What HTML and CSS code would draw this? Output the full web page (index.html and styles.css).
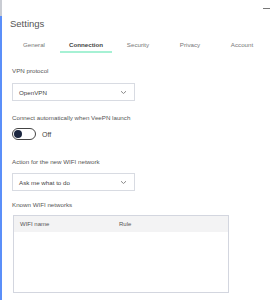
FILE: index.html
```html
<!DOCTYPE html>
<html>
  <head>
    <meta charset="utf-8">
    <title>Settings</title>
    <link rel="stylesheet" href="styles.css">
  </head>
  <body>
    <div class="window">
      <div class="minimize"></div>

      <h1 class="title">Settings</h1>

      <div class="tabs">
        <div class="tab">General</div>
        <div class="tab active">Connection</div>
        <div class="tab">Security</div>
        <div class="tab">Privacy</div>
        <div class="tab">Account</div>
      </div>

      <div class="content">
        <div class="label">VPN protocol</div>
        <div class="select">
          <span>OpenVPN</span>
          <svg class="chevron" width="7" height="5" viewBox="0 0 7 5"><path d="M1 1.2 L3.5 3.5 L6 1.2" fill="none" stroke="#8a8a8a" stroke-width="1"/></svg>
        </div>

        <div class="label label-auto">Connect automatically when VeePN launch</div>
        <div class="switch-row">
          <div class="switch"><div class="knob"></div></div>
          <span class="switch-text">Off</span>
        </div>

        <div class="label label-action">Action for the new WIFI network</div>
        <div class="select select-action">
          <span>Ask me what to do</span>
          <svg class="chevron" width="7" height="5" viewBox="0 0 7 5"><path d="M1 1.2 L3.5 3.5 L6 1.2" fill="none" stroke="#8a8a8a" stroke-width="1"/></svg>
        </div>

        <div class="label label-known">Known WIFI networks</div>
        <div class="table">
          <div class="table-head">
            <span class="col-name">WIFI name</span>
            <span class="col-rule">Rule</span>
          </div>
        </div>
      </div>
    </div>
  </body>
</html>
```

FILE: styles.css
```css
body{
  margin: 0;
  background: #fff;
  font-family: "Liberation Sans", Arial, sans-serif;
  color: #555;
}

.window{
  position: relative;
  width: 279px;
  height: 300px;
  box-sizing: border-box;
  border-left: 2px solid #5b8ff9;
}

.window::before{
  content: "";
  position: absolute;
  left: -2px;
  top: 0;
  width: 2px;
  height: 16px;
  background: #c9ccd3;
}

.minimize{
  position: absolute;
  top: 8px;
  left: 261px;
  width: 7px;
  height: 1px;
  background: #777;
}

.title{
  margin: 0;
  padding: 18px 0 0 8px;
  font-size: 9.5px;
  font-weight: normal;
  color: #555;
  line-height: 12px;
}

.tabs{
  display: flex;
  margin-top: 8px;
  padding-left: 6px;
}

.tab{
  width: 52px;
  text-align: center;
  font-size: 6.2px;
  line-height: 8px;
  color: #777;
  padding: 3px 0 2px;
  border-bottom: 2px solid transparent;
}

.tab.active{
  color: #444;
  font-weight: bold;
  border-bottom-color: #a6f1d4;
}

.content{
  padding: 14px 0 0 10px;
}

.label{
  font-size: 6.2px;
  line-height: 8px;
  color: #555;
}

.select{
  display: flex;
  align-items: center;
  justify-content: space-between;
  width: 123px;
  height: 18px;
  box-sizing: border-box;
  margin-top: 8px;
  padding: 0 7px 0 6px;
  border: 1px solid #d8dbe2;
  font-size: 6.2px;
  color: #444;
}

.select-action{
  margin-top: 7px;
}

.label-auto{
  margin-top: 13px;
}

.switch-row{
  display: flex;
  align-items: center;
  margin-top: 6px;
}

.switch{
  width: 24px;
  height: 12px;
  box-sizing: border-box;
  border: 1px solid #444;
  border-radius: 6px;
  padding: 1px;
}

.knob{
  width: 8px;
  height: 8px;
  border-radius: 50%;
  background: #1c2740;
}

.switch-text{
  margin-left: 6px;
  font-size: 7px;
  color: #444;
}

.label-action{
  margin-top: 18px;
}

.label-known{
  margin-top: 10px;
}

.table{
  width: 216px;
  height: 78px;
  box-sizing: border-box;
  margin-top: 6px;
  margin-left: 1px;
  border: 1px solid #d3d6df;
}

.table-head{
  display: flex;
  height: 16px;
  align-items: center;
  background: #f3f3f4;
  font-size: 6px;
  color: #555;
}

.col-name{
  width: 99px;
  padding-left: 6px;
}
```
